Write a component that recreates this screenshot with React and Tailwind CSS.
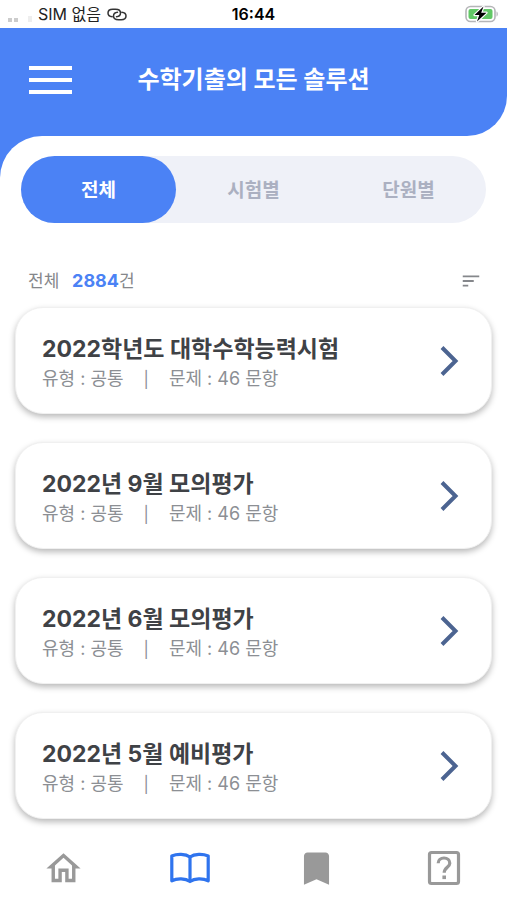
import { MdBookmark, MdOutlineHome, MdSort } from 'react-icons/md';

const TABS = ['전체', '시험별', '단원별'];

const EXAMS = [
  { title: '2022학년도 대학수학능력시험', type: '공통', count: 46 },
  { title: '2022년 9월 모의평가', type: '공통', count: 46 },
  { title: '2022년 6월 모의평가', type: '공통', count: 46 },
  { title: '2022년 5월 예비평가', type: '공통', count: 46 },
];

function LinkIcon() {
  return (
    <svg width="20" height="13" viewBox="0 0 20 13" fill="none" stroke="#333" strokeWidth="1.5" strokeLinecap="round">
      <path d="M5.200 8.700C2.700 8.500 1 7 1 5 1 2.700 3 1.300 5.800 1.300h2.700c2.900 0 5 1.500 5 3.700 0 2-1.700 3.500-4 3.700" />
      <path d="M14.800 4.300C17.300 4.500 19 6 19 8c0 2.300-2 3.700-4.800 3.700h-2.700c-2.900 0-5-1.500-5-3.700 0-2 1.700-3.500 4-3.700" />
    </svg>
  );
}

function BatteryIcon() {
  return (
    <svg width="34" height="18" viewBox="0 0 34 18">
      <rect x="1" y="1.5" width="29" height="15" rx="4.5" fill="#fff" stroke="#b5b5b8" strokeWidth="1.6" />
      <path d="M31.5 6.500c1.800.5 1.800 4.500 0 5z" fill="#b5b5b8" />
      <rect x="3.500" y="4" width="24" height="10" rx="2" fill="#62c866" />
      <path d="M18.500 1.500 9.500 10h4.800L12 16.500l9.500-8.800h-5.300z" fill="#000" stroke="#fff" strokeWidth="2.400" paintOrder="stroke" strokeLinejoin="round" />
    </svg>
  );
}

function BookIcon() {
  return (
    <svg width="42" height="34" viewBox="0 0 42 34" fill="none" stroke="#2f74ee" strokeWidth="3.200" strokeLinejoin="round">
      <path d="M21 6C16.500 2.700 8 2.700 2.800 5v24.800c5.200-2.700 13.700-2.500 18.200.7 4.500-3.200 13-3.400 18.200-.7V5C34 2.700 25.500 2.700 21 6z" />
      <path d="M21 6v24.500" />
    </svg>
  );
}

function HelpIcon() {
  return (
    <svg width="34" height="36" viewBox="0 0 34 36" fill="none" stroke="#999">
      <rect x="2.500" y="2.500" width="29" height="31" rx="2" strokeWidth="3.200" />
      <path d="M11.200 13.200c0-3 2.500-5.200 5.800-5.200s5.800 2.200 5.800 5.200c0 4-5.600 4.400-5.600 9.600" strokeWidth="3.200" />
      <path d="M17.200 25.500v3.600" strokeWidth="3.600" />
    </svg>
  );
}

function StatusBar() {
  return (
    <div className="grid h-7 grid-cols-3 items-center px-2 text-base text-[#222]">
      <div className="flex items-center gap-1.5">
        <span className="flex h-4 items-end gap-0.5">
          <span className="size-1 bg-[#ccc]" />
          <span className="size-1 bg-[#ccc]" />
          <span className="ml-2 h-1.5 w-1 bg-[#eee]" />
        </span>
        <span className="whitespace-nowrap">SIM 없음</span>
        <LinkIcon />
      </div>
      <span className="text-center font-semibold text-black">16:44</span>
      <div className="flex justify-end">
        <BatteryIcon />
      </div>
    </div>
  );
}

function ExamCard({ title, type, count }) {
  return (
    <li>
      <a
        href="#exam"
        className="flex h-[107px] items-center justify-between rounded-[28px] border border-[#f0f0f0] bg-white pr-8 pl-[26px] shadow-[0_3px_6px_rgba(0,0,0,0.28)]"
      >
        <div className="pt-1">
          <h2 className="text-[23px] leading-8 font-bold text-[#3f4246]">{title}</h2>
          <p className="flex text-lg leading-7 text-[#8c8f94]">
            <span>유형 : {type}</span>
            <span className="px-5 text-base leading-7">|</span>
            <span>문제 : {count} 문항</span>
          </p>
        </div>
        <svg width="20" height="32" viewBox="0 0 20 32" fill="none" stroke="#4c6491" strokeWidth="4">
          <path d="M3 2.500 16.500 16 3 29.500" />
        </svg>
      </a>
    </li>
  );
}

export default function App() {
  return (
    <div className="flex min-h-screen flex-col bg-white font-[Inter,'Noto_Sans_CJK_KR',sans-serif]" lang="ko">
      <StatusBar />
      <header className="grid h-[108px] grid-cols-[43px_1fr_43px] items-center rounded-br-[40px] bg-[#4b82f5] px-[29px] pb-1">
        <button type="button" aria-label="메뉴" className="flex flex-col gap-2">
          <span className="h-1 w-full bg-white" />
          <span className="h-1 w-full bg-white" />
          <span className="h-1 w-full bg-white" />
        </button>
        <h1 className="text-center text-2xl font-bold text-white">수학기출의 모든 솔루션</h1>
      </header>

      <div className="flex grow flex-col bg-[#4b82f5]">
        <main className="grow rounded-tl-[42px] bg-white px-[15px] pt-5">
          <div className="mx-1.5 grid grid-cols-3 rounded-full bg-[#eff1f8]">
            {TABS.map((tab, i) => (
              <button
                key={tab}
                type="button"
                className={
                  i === 0
                    ? 'h-[67px] rounded-full bg-[#4b82f5] pt-1 text-[19px] font-bold text-white'
                    : 'h-[67px] rounded-full pt-1 text-[19px] font-bold text-[#abb0c1]'
                }
              >
                {tab}
              </button>
            ))}
          </div>

          <div className="mt-11 flex h-7 items-center justify-between pr-2.5 pl-[13px] text-[17px] text-[#85878b]">
            <p>
              전체 <strong className="ml-2 text-lg font-bold text-[#4b82f5]">2884</strong>건
            </p>
            <button type="button" aria-label="정렬">
              <MdSort size={22} />
            </button>
          </div>

          <ul className="mt-3 flex flex-col gap-7">
            {EXAMS.map((exam) => (
              <ExamCard key={exam.title} {...exam} />
            ))}
          </ul>
        </main>
      </div>

      <nav className="grid h-16 grid-cols-4 place-items-center bg-white text-[#999]">
        <a href="#home" aria-label="홈">
          <MdOutlineHome size={41} />
        </a>
        <a href="#exams" aria-label="기출문제">
          <BookIcon />
        </a>
        <a href="#bookmarks" aria-label="북마크">
          <MdBookmark size={43} />
        </a>
        <a href="#help" aria-label="도움말">
          <HelpIcon />
        </a>
      </nav>
    </div>
  );
}
